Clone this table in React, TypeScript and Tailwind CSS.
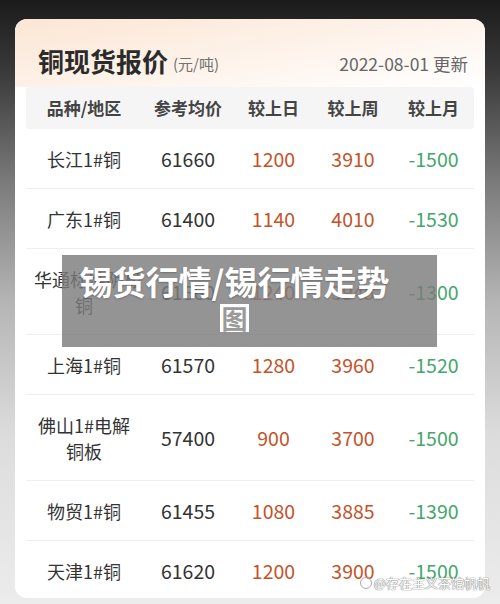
import React from "react";

type Row = { name: React.ReactNode; avg: string; d: string; w: string; m: string };

const rows: Row[] = [
  { name: "长江1#铜", avg: "61660", d: "1200", w: "3910", m: "-1500" },
  { name: "广东1#铜", avg: "61400", d: "1140", w: "4010", m: "-1530" },
  {
    name: (
      <>
        <span className="whitespace-nowrap">华通标准阴极</span>
        <br />
        铜
      </>
    ),
    avg: "61660",
    d: "1240",
    w: "3945",
    m: "-1300",
  },
  { name: "上海1#铜", avg: "61570", d: "1280", w: "3960", m: "-1520" },
  { name: "佛山1#电解铜板", avg: "57400", d: "900", w: "3700", m: "-1500" },
  { name: "物贸1#铜", avg: "61455", d: "1080", w: "3885", m: "-1390" },
  { name: "天津1#铜", avg: "61620", d: "1200", w: "3900", m: "-1500" },
];

const font = { fontFamily: '"Noto Sans CJK SC", "Noto Sans", sans-serif' };

export default function App() {
  return (
    <div
      className="relative w-[500px] h-[604px] overflow-hidden pt-[19px] px-[15px] bg-[linear-gradient(180deg,#1b1b1b_0%,#3a3a3a_12%,#7a7a7a_30%,#b5b5b5_50%,#dcdcdc_72%,#ececec_100%)]"
      style={font}
    >
      <div className="relative w-[470px] h-[579px] rounded-[12px] bg-white overflow-hidden">
        <div className="bg-[linear-gradient(170deg,#fbe6d4_0%,#fdf1e7_45%,#ffffff_100%)] h-[68px] flex items-end justify-between pl-[23px] pr-[17px] pb-[9px]">
          <div className="flex items-end">
            <span className="text-[26px] leading-[34px] font-bold text-[#2b2b2b]">铜现货报价</span>
            <span className="text-[15px] leading-[28px] text-[#707070] ml-[5px]">(元/吨)</span>
          </div>
          <span className="text-[17.5px] leading-[28px] text-[#666]">2022-08-01 更新</span>
        </div>
        <div className="px-[11px]">
          <div className="grid grid-cols-[116px_92px_79px_80px_81px] h-[42px] items-center bg-[#f5f5f5] rounded-[4px] text-[17px] font-bold text-[#444] text-center">
            <span>品种/地区</span>
            <span>参考均价</span>
            <span>较上日</span>
            <span>较上周</span>
            <span>较上月</span>
          </div>
          {rows.map((r, i) => (
            <div
              key={i}
              className={`grid grid-cols-[116px_92px_79px_80px_81px] items-center text-center leading-[26px] py-[16.5px] ${
                i < rows.length - 1 ? "border-b border-[#eeeeee]" : ""
              }`}
            >
              <span className="text-[#333] text-[18px] px-[8px]">{r.name}</span>
              <span className="text-[#333] text-[19.5px]">{r.avg}</span>
              <span className="text-[#c4532a] text-[19.5px]">{r.d}</span>
              <span className="text-[#c4532a] text-[19.5px]">{r.w}</span>
              <span className="text-[#45a66c] text-[19.5px]">{r.m}</span>
            </div>
          ))}
        </div>
        <div className="absolute left-[47px] top-[236px] w-[375px] h-[92px] bg-[rgba(125,125,125,0.82)] flex flex-col items-center pt-[6px] pr-[30px]">
          <span className="text-[33px] leading-[40px] font-bold text-white [text-shadow:0_1px_2px_rgba(0,0,0,0.25)]">
            锡货行情/锡行情走势
          </span>
          <span className="mt-[3px] bg-white text-[#9a9a9a] text-[26px] leading-[28px] font-bold px-[1px]">图</span>
        </div>
      </div>
      <div className="absolute right-[10px] bottom-[14px] flex items-center gap-[2px] text-[13px] leading-[14px] text-white [text-shadow:0_0_1px_#888,0_0_1px_#888,0_0_1px_#888]">
        <span className="w-[12px] h-[12px] rounded-full border border-[#aaa] inline-block" />
        <span>@存在主义茶馆帆帆</span>
      </div>
    </div>
  );
}
